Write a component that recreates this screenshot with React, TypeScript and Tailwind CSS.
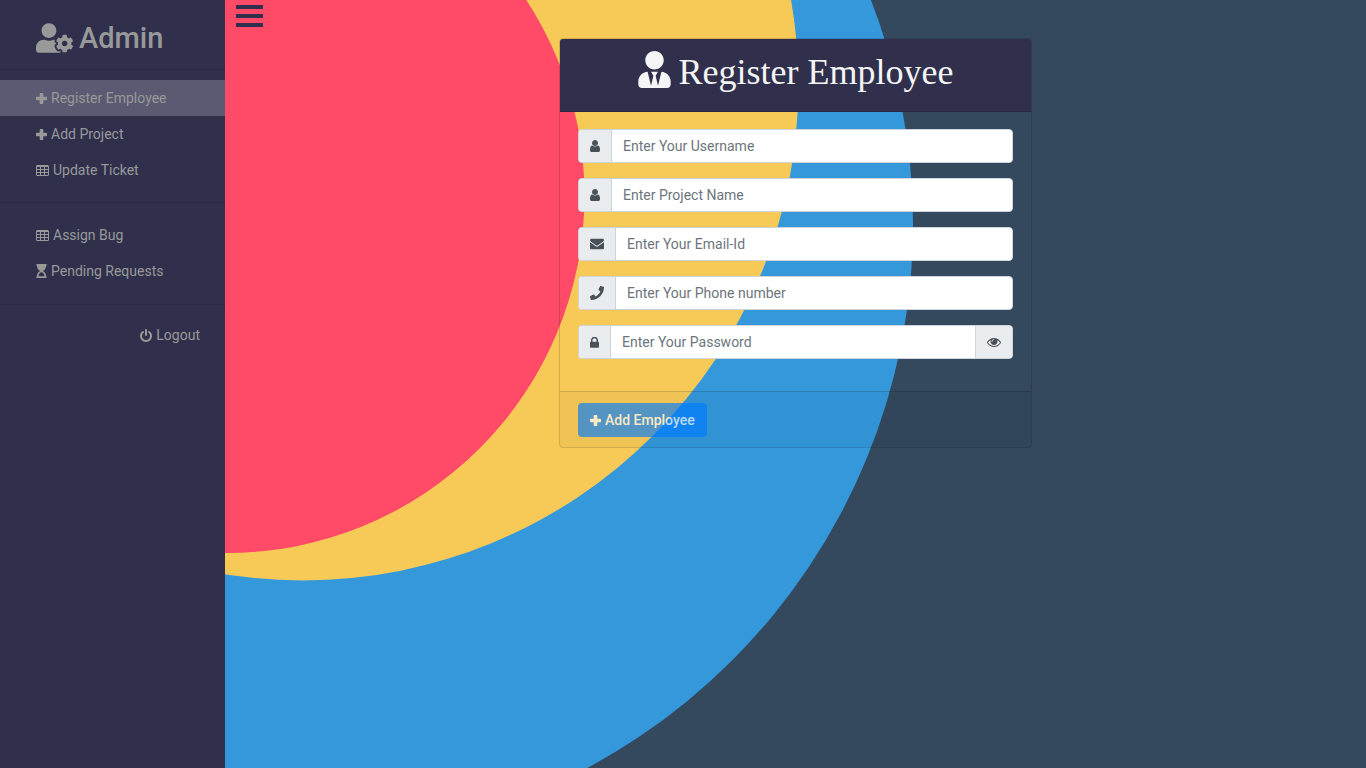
import { useState } from "react";
import type { ReactNode } from "react";
import { FaEnvelope, FaHourglassStart, FaPhone, FaUserCog, FaUserTie } from "react-icons/fa";

type GlyphProps = { box: string; d: string; className: string };

function Glyph({ box, d, className }: GlyphProps) {
  return (
    <svg viewBox={box} fill="currentColor" fillRule="evenodd" aria-hidden="true" className={`shrink-0 ${className}`}>
      <path d={d} />
    </svg>
  );
}

const PLUS =
  "M4.4 0h2.2a.7.7 0 0 1 .7.7v3h3a.7.7 0 0 1 .7.7v2.2a.7.7 0 0 1-.7.7h-3v3a.7.7 0 0 1-.7.7h-2.2a.7.7 0 0 1-.7-.7v-3h-3a.7.7 0 0 1-.7-.7v-2.2a.7.7 0 0 1 .7-.7h3v-3a.7.7 0 0 1 .7-.7z";
const USER =
  "M1536 1399q0 109-62.5 187t-150.5 78h-854q-88 0-150.5-78t-62.5-187q0-85 8.5-160.5t31.5-152 58.5-131 94-89 134.5-34.5q131 128 313 128t313-128q76 0 134.5 34.5t94 89 58.5 131 31.5 152 8.5 160.5zm-256-887q0 159-112.5 271.5t-271.5 112.5-271.5-112.5-112.5-271.5 112.5-271.5 271.5-112.5 271.5 112.5 112.5 271.5z";
const POWER =
  "M1664 896q0 156-61 298t-164 245-245 164-298 61-298-61-245-164-164-245-61-298q0-182 80.5-343t226.5-270q43-32 95.5-25t83.5 50q32 42 24.5 94.5t-49.5 84.5q-98 74-151.5 181t-53.5 228q0 104 40.5 198.5t109.5 163.5 163.5 109.5 198.5 40.5 198.5-40.5 163.5-109.5 109.5-163.5 40.5-198.5q0-121-53.5-228t-151.5-181q-42-32-49.5-84.5t24.5-94.5q31-43 84-50t95 25q146 109 226.5 270t80.5 343zm-640-768v640q0 52-38 90t-90 38-90-38-38-90v-640q0-52 38-90t90-38 90 38 38 90z";
const LOCK =
  "M640 768h512v-192q0-106-75-181t-181-75-181 75-75 181v192zm832 96v576q0 40-28 68t-68 28h-960q-40 0-68-28t-28-68v-576q0-40 28-68t68-28h32v-192q0-184 132-316t316-132 316 132 132 316v192h32q40 0 68 28t28 68z";
const EYE =
  "M1664 960q-152-236-381-353 61 104 61 225 0 185-131.5 316.5t-316.5 131.5-316.5-131.5-131.5-316.5q0-121 61-225-229 117-381 353 133 205 333.5 326.5t434.5 121.5 434.5-121.5 333.5-326.5zm-720-384q0-20-14-34t-34-14q-125 0-214.5 89.5t-89.5 214.5q0 20 14 34t34 14 34-14 14-34q0-86 61-147t147-61q20 0 34-14t14-34zm848 384q0 34-20 69-140 230-376.5 368.5t-499.5 138.5-499.5-139-376.5-368q-20-35-20-69t20-69q140-229 376.5-368t499.5-139 499.5 139 376.5 368q20 35 20 69z";
const TABLE =
  "M1.5 0h10a1.5 1.5 0 0 1 1.5 1.5v8a1.5 1.5 0 0 1-1.5 1.5h-10a1.5 1.5 0 0 1-1.5-1.5v-8a1.5 1.5 0 0 1 1.5-1.5zM1 2v2h3v-2zM5 2v2h3v-2zM9 2v2h3v-2zM1 5v2h3v-2zM5 5v2h3v-2zM9 5v2h3v-2zM1 8v2h3v-2zM5 8v2h3v-2zM9 8v2h3v-2z";

const plusIcon = <Glyph box="0 0 11 11" d={PLUS} className="size-[11px]" />;
const tableIcon = <Glyph box="0 0 13 11" d={TABLE} className="h-[11px] w-[13px]" />;
const userIcon = <Glyph box="256 128 1280 1536" d={USER} className="h-3 w-[10px]" />;

function NavLink({ icon, label, active = false }: { icon: ReactNode; label: string; active?: boolean }) {
  return (
    <a
      href="#"
      aria-current={active ? "page" : undefined}
      className={`flex h-9 items-center gap-1 pl-9 ${active ? "bg-[#5a5a72]" : ""}`}
    >
      {icon}
      {label}
    </a>
  );
}

type FieldProps = {
  id: string;
  label: string;
  type: string;
  icon: ReactNode;
  end?: ReactNode;
};

function Field({ id, label, type, icon, end }: FieldProps) {
  return (
    <div className="flex h-[34px] overflow-hidden rounded border border-[#ced4da] bg-white">
      <label
        htmlFor={id}
        className="flex items-center border-r border-[#ced4da] bg-[#e9ecef] px-[11px] text-[#495057]"
      >
        {icon}
      </label>
      <input
        id={id}
        type={type}
        aria-label={label}
        placeholder={label}
        className="min-w-0 flex-1 px-[11px] text-[#495057] outline-none placeholder:text-[#6c757d]"
      />
      {end}
    </div>
  );
}

function Backdrop() {
  return (
    <svg
      viewBox="0 0 1366 768"
      preserveAspectRatio="xMinYMin slice"
      aria-hidden="true"
      className="absolute inset-0 size-full bg-[#34495e]"
    >
      <circle cx="296" cy="224" r="617" fill="#3498db" />
      <circle cx="303" cy="85" r="495.4" fill="#f7ca58" />
      <circle cx="227" cy="195.5" r="357.5" fill="#ff4b67" />
    </svg>
  );
}

export default function App() {
  const [open, setOpen] = useState(true);
  const [visible, setVisible] = useState(false);

  return (
    <div className="relative flex min-h-screen overflow-hidden font-[Roboto,'Liberation_Sans',sans-serif] text-[14px] leading-[22px]">
      <Backdrop />
      {open && (
        <nav className="relative w-[225px] shrink-0 bg-[#30304d] text-[#999999]">
          <h2 className="flex h-[70px] items-center gap-[6px] border-b border-[#2b2b45] pl-9 pt-[6px] text-[29px] font-medium">
            <FaUserCog className="h-[30px] w-[37px]" />
            Admin
          </h2>
          <div className="border-b border-[#2b2b45] pb-[14px] pt-[10px]">
            <NavLink icon={plusIcon} label="Register Employee" active />
            <NavLink icon={plusIcon} label="Add Project" />
            <NavLink icon={tableIcon} label="Update Ticket" />
          </div>
          <div className="border-b border-[#2b2b45] pb-[15px] pt-[14px]">
            <NavLink icon={tableIcon} label="Assign Bug" />
            <NavLink icon={<FaHourglassStart className="h-[14px] w-[11px]" />} label="Pending Requests" />
          </div>
          <a href="#" className="flex items-center justify-end gap-1 pr-[25px] pt-[19px]">
            <Glyph box="128 0 1536 1664" d={POWER} className="h-[13px] w-3" />
            Logout
          </a>
        </nav>
      )}
      <div className="relative flex-1">
        <button
          type="button"
          aria-label="Toggle menu"
          onClick={() => setOpen(!open)}
          className="absolute left-[11px] top-[5px] flex w-[27px] flex-col gap-[5px]"
        >
          <span className="h-1 bg-[#30304d]" />
          <span className="h-1 bg-[#30304d]" />
          <span className="h-1 bg-[#30304d]" />
        </button>
        <form
          onSubmit={(event) => event.preventDefault()}
          className="mx-auto mt-[38px] w-full max-w-[473px] overflow-hidden rounded border border-black/15"
        >
          <h1 className="flex h-[73px] items-center justify-center gap-2 border-b border-[#292942] bg-[#30304d] pb-[6px] font-['Liberation_Serif',serif] text-[36px] text-[#f5f5f5]">
            <FaUserTie className="mb-[6px] h-[37px] w-[33px]" />
            Register Employee
          </h1>
          <div className="flex flex-col gap-[15px] px-[18px] pb-8 pt-[17px]">
            <Field id="username" type="text" label="Enter Your Username" icon={userIcon} />
            <Field id="project" type="text" label="Enter Project Name" icon={userIcon} />
            <Field id="email" type="email" label="Enter Your Email-Id" icon={<FaEnvelope className="size-[14px]" />} />
            <Field id="phone" type="tel" label="Enter Your Phone number" icon={<FaPhone className="size-[14px]" />} />
            <Field
              id="password"
              type={visible ? "text" : "password"}
              label="Enter Your Password"
              icon={<Glyph box="320 192 1152 1344" d={LOCK} className="h-[11px] w-[9px]" />}
              end={
                <button
                  type="button"
                  aria-label="Show password"
                  onClick={() => setVisible(!visible)}
                  className="flex items-center border-l border-[#ced4da] bg-[#e9ecef] px-[11px] text-[#495057]"
                >
                  <Glyph box="0 384 1792 1152" d={EYE} className="h-[9px] w-[14px]" />
                </button>
              }
            />
          </div>
          <div className="border-t border-black/15 bg-black/[0.03] px-[18px] pb-[10px] pt-[11px]">
            <button
              type="submit"
              className="flex h-[34px] items-center gap-1 rounded bg-[#007bff] px-3 font-medium text-white opacity-65"
            >
              {plusIcon}
              Add Employee
            </button>
          </div>
        </form>
      </div>
    </div>
  );
}
